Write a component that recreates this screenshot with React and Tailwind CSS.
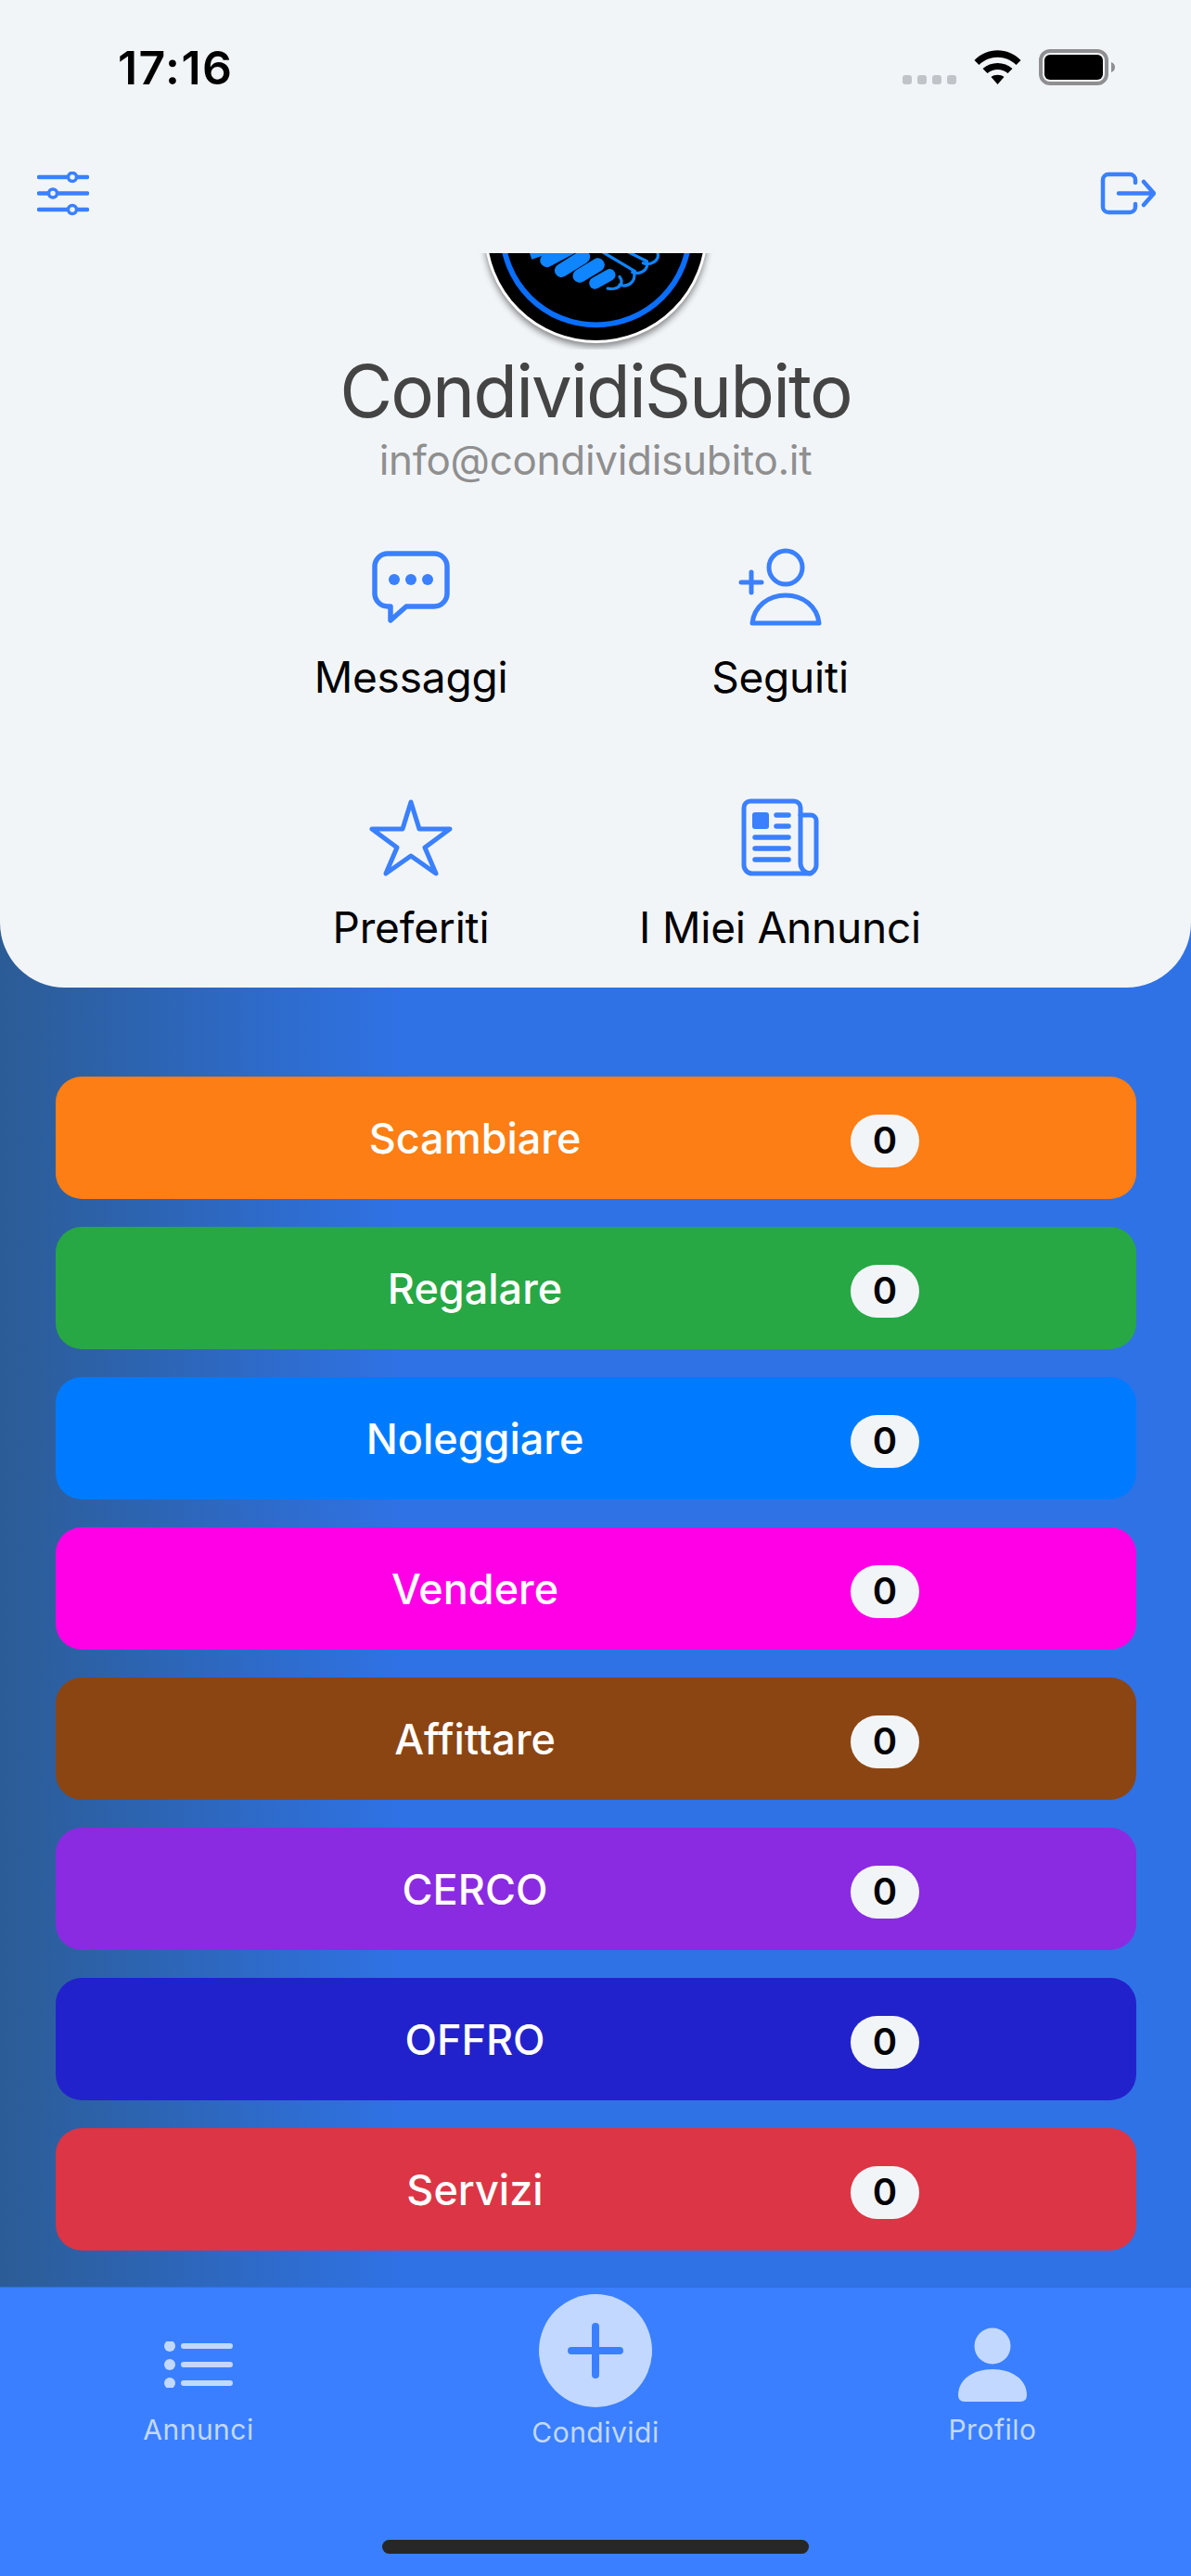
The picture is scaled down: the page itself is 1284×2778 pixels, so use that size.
const buckets = [
  { label: 'Scambiare', color: 'bg-[#fd7e14]' },
  { label: 'Regalare', color: 'bg-[#28a745]' },
  { label: 'Noleggiare', color: 'bg-[#007bff]' },
  { label: 'Vendere', color: 'bg-[#ff00e6]' },
  { label: 'Affittare', color: 'bg-[#8b4513]' },
  { label: 'CERCO', color: 'bg-[#8a2be2]' },
  { label: 'OFFRO', color: 'bg-[#2222cc]' },
  { label: 'Servizi', color: 'bg-[#dc3545]' },
]

function Wifi() {
  return (
    <svg width="51" height="37" viewBox="0 0 51 37" className="mb-[1px]" fill="#000">
      <path d="M0.5 11 C14 -3.5 37 -3.5 50.5 11 L45.5 16 C34.5 5 16.5 5 5.5 16 Z" />
      <path d="M9.5 20 C18 12 33 12 41.5 20 L36.5 25 C30 19.5 21 19.5 14.5 25 Z" />
      <path d="M18.5 29 C22 26 29 26 32.5 29 L25.5 37 Z" />
    </svg>
  )
}

function Battery() {
  return (
    <svg width="82" height="39" viewBox="0 0 82 39">
      <rect x="2" y="2" width="71" height="35" rx="10" fill="none" stroke="#8f8f92" strokeWidth="4" />
      <rect x="6" y="6" width="63" height="27" rx="6" fill="#000" />
      <path d="M78 14 C81 15 82 17 82 19.5 C82 22 81 24 78 25 Z" fill="#8f8f92" />
    </svg>
  )
}

function FilterIcon() {
  return (
    <svg width="56" height="48" viewBox="0 0 56 48" fill="none" stroke="#3a80ff" strokeLinecap="round">
      <path d="M2 6 H54 M2 23.5 H54 M2 41 H54" strokeWidth="4.5" />
      <circle cx="38" cy="6" r="4.5" fill="#f2f5f8" strokeWidth="3.5" />
      <circle cx="17" cy="23.5" r="4.5" fill="#f2f5f8" strokeWidth="3.5" />
      <circle cx="38" cy="41" r="4.5" fill="#f2f5f8" strokeWidth="3.5" />
    </svg>
  )
}

function LogoutIcon() {
  return (
    <svg width="60" height="48" viewBox="0 0 60 48" fill="none" stroke="#3a80ff" strokeWidth="4.5" strokeLinecap="round" strokeLinejoin="round">
      <path d="M38 12 V9 a6 6 0 0 0 -6 -6 H9 a6 6 0 0 0 -6 6 V38 a6 6 0 0 0 6 6 H32 a6 6 0 0 0 6 -6 V35" />
      <path d="M20 23.5 H57 M47 11 L58 23.5 L47 36" />
    </svg>
  )
}

function Logo() {
  return (
    <svg viewBox="0 0 240 240" className="w-full h-full" fill="none" strokeLinecap="round">
      <circle cx="120" cy="120" r="103" stroke="#0a6fff" strokeWidth="6" />
      <g stroke="#0f85ff">
        <path d="M96 136 L66 152" strokeWidth="15" />
        <path d="M106 148 L82 163" strokeWidth="15" />
        <path d="M122 157 L102 169" strokeWidth="15" />
        <path d="M135 168 L119 177" strokeWidth="13" />
        <path d="M66 141 L48 147" strokeWidth="8" strokeLinecap="butt" />
      </g>
      <g stroke="#0f85ff" strokeWidth="3.3" strokeLinejoin="round">
        <path d="M126 142 L163 164" />
        <path d="M150 140 L176 153" />
        <path d="M188 144 C190 152 181 158 172 155" />
        <path d="M176 154 C178 163 168 168 160 165" />
        <path d="M162 165 C164 175 156 182 146 179" />
        <path d="M146 170 C151 176 147 185 133 183" />
      </g>
    </svg>
  )
}

function ChatIcon() {
  return (
    <svg width="84" height="78" viewBox="0 0 84 78" fill="none" stroke="#3a80ff" strokeWidth="5.5" strokeLinejoin="round">
      <path d="M17 3 H67 a14 14 0 0 1 14 14 V46 a14 14 0 0 1 -14 14 H37 L20 75 V60 H17 a14 14 0 0 1 -14 -14 V17 a14 14 0 0 1 14 -14 Z" />
      <circle cx="24" cy="31" r="6" fill="#3a80ff" stroke="none" />
      <circle cx="42" cy="31" r="6" fill="#3a80ff" stroke="none" />
      <circle cx="60" cy="31" r="6" fill="#3a80ff" stroke="none" />
    </svg>
  )
}

function UserPlusIcon() {
  return (
    <svg width="90" height="84" viewBox="0 0 90 84" fill="none" stroke="#3a80ff" strokeWidth="5" strokeLinecap="round" strokeLinejoin="round">
      <circle cx="51" cy="21" r="18" />
      <path d="M15 81 C17 63 32 51 51 51 C70 51 85 63 87 81 Z" />
      <path d="M3 37 H25 M14 26 V48" />
    </svg>
  )
}

function StarIcon() {
  return (
    <svg width="90" height="84" viewBox="0 0 90 84" fill="none" stroke="#3a80ff" strokeWidth="5" strokeLinejoin="round">
      <path d="M45 4 L54 33 L87 33 L60 53 L72 81 L45 62 L18 81 L30 53 L3 33 L36 33 Z" />
    </svg>
  )
}

function NewsIcon() {
  return (
    <svg width="84" height="84" viewBox="0 0 84 84" fill="none" stroke="#3a80ff" strokeWidth="5" strokeLinecap="round" strokeLinejoin="round">
      <path d="M12 81 H72 a9 9 0 0 0 9 -9 V24 a6 6 0 0 0 -6 -6 H64 V10 a7 7 0 0 0 -7 -7 H10 a7 7 0 0 0 -7 7 V72 a9 9 0 0 0 9 9 Z" />
      <path d="M64 18 V70 a11 11 0 0 0 11 11" />
      <rect x="12" y="15" width="18" height="18" rx="3" fill="#3a80ff" stroke="none" />
      <path d="M38 18 H51 M38 30 H51 M15 42 H51 M15 54 H51 M15 66 H51" strokeWidth="5.5" />
    </svg>
  )
}

function ListIcon() {
  return (
    <svg width="74" height="50" viewBox="0 0 74 50" fill="#c2d8ff" stroke="#c2d8ff" strokeLinecap="round">
      <circle cx="6" cy="5" r="6" stroke="none" />
      <circle cx="6" cy="25" r="6" stroke="none" />
      <circle cx="6" cy="45" r="6" stroke="none" />
      <path d="M21 5 H71 M21 25 H71 M21 45 H71" strokeWidth="6" />
    </svg>
  )
}

function PersonIcon() {
  return (
    <svg width="74" height="80" viewBox="0 0 74 80" fill="#c2d8ff">
      <circle cx="37" cy="20" r="19.5" />
      <path d="M0 73 C0 56 16 45 37 45 C58 45 74 56 74 73 Q74 80 67 80 H7 Q0 80 0 73 Z" />
    </svg>
  )
}

function Action({ icon, label }) {
  return (
    <div className="flex flex-col items-center">
      <div className="h-[84px] flex items-center justify-center">{icon}</div>
      <span className="mt-[27px] text-[46px] leading-[56px] tracking-[-0.2px] text-black">{label}</span>
    </div>
  )
}

function BucketRow({ label, color }) {
  return (
    <div className={`h-[132px] rounded-[28px] flex items-center ${color}`}>
      <span className="ml-[92px] w-[720px] mt-[2px] text-center text-[45px] font-medium text-white">{label}</span>
      <span className="ml-[45px] mt-[6px] w-[74px] h-[57px] rounded-full bg-[#f2f5f8] flex items-center justify-center text-[40px] font-semibold text-black">
        0
      </span>
    </div>
  )
}

export default function App() {
  return (
    <div className="w-full h-[2778px] flex flex-col font-['Inter',sans-serif] bg-linear-to-r from-[#2c5c96] to-[#2f72e6] to-[34%]">
      {/* top card */}
      <div className="h-[1065px] rounded-b-[70px] bg-[#f2f5f8]">
        <div className="h-[185px] pt-[43px] pl-[127px] pr-[82px] flex justify-between">
          <span className="text-[50px] leading-[60px] font-semibold text-black tracking-[1.4px]">17:16</span>
          <div className="h-[39px] mt-[10px] flex items-end">
            <div className="flex gap-[6px] mb-[1px] mr-[19px]">
              <span className="w-[10px] h-[10px] rounded-[3px] bg-[#c0c4c8]" />
              <span className="w-[10px] h-[10px] rounded-[3px] bg-[#c0c4c8]" />
              <span className="w-[10px] h-[10px] rounded-[3px] bg-[#c0c4c8]" />
              <span className="w-[10px] h-[10px] rounded-[3px] bg-[#c0c4c8]" />
            </div>
            <Wifi />
            <div className="ml-[19px]">
              <Battery />
            </div>
          </div>
        </div>

        <div className="h-[88px] pl-[40px] pr-[38px] flex justify-between items-start">
          <FilterIcon />
          <LogoutIcon />
        </div>

        <div className="h-[104px] overflow-hidden flex justify-center">
          <div className="w-[241px] h-[241px] shrink-0 -mt-[144px] rounded-full bg-black border-[3px] border-white shadow-[0_4px_7px_rgba(0,0,0,0.45)]">
            <Logo />
          </div>
        </div>

        <div className="text-center text-[78px] leading-[90px] tracking-[-1.9px] text-[#444444]">CondividiSubito</div>
        <div className="mt-[4px] text-center text-[44px] leading-[50px] tracking-[-0.3px] text-[#8f8f8f]">info@condividisubito.it</div>

        <div className="mt-[70px] grid grid-cols-[398px_398px] justify-center gap-y-[103px]">
          <Action icon={<ChatIcon />} label="Messaggi" />
          <Action icon={<UserPlusIcon />} label="Seguiti" />
          <Action icon={<StarIcon />} label="Preferiti" />
          <Action icon={<NewsIcon />} label="I Miei Annunci" />
        </div>
      </div>

      {/* category buttons */}
      <div className="flex-1 pt-[96px] pl-[60px] pr-[59px] flex flex-col gap-[30px]">
        {buckets.map((b) => (
          <BucketRow key={b.label} label={b.label} color={b.color} />
        ))}
      </div>

      {/* tab bar */}
      <div className="h-[312px] bg-[#3a7fff] border-t border-[#2f6ee0]">
        <div className="h-[272px] grid grid-cols-3 text-[#c2d8ff] text-[30px] leading-[36px] tracking-[0.5px]">
          <div className="pt-[43px] flex flex-col items-center">
            <div className="h-[80px] flex items-center">
              <ListIcon />
            </div>
            <span className="mt-[12px]">Annunci</span>
          </div>
          <div className="pt-[7px] flex flex-col items-center">
            <div className="w-[122px] h-[122px] rounded-full bg-[#c2d8ff] flex items-center justify-center">
              <svg width="60" height="60" viewBox="0 0 60 60" fill="none" stroke="#3a7fff" strokeWidth="8" strokeLinecap="round">
                <path d="M30 4 V56 M4 30 H56" />
              </svg>
            </div>
            <span className="mt-[9px]">Condividi</span>
          </div>
          <div className="pt-[43px] flex flex-col items-center">
            <div className="h-[80px] flex items-center">
              <PersonIcon />
            </div>
            <span className="mt-[12px]">Profilo</span>
          </div>
        </div>
        <div className="flex justify-center">
          <div className="w-[460px] h-[15px] rounded-full bg-[#272727]" />
        </div>
      </div>
    </div>
  )
}
